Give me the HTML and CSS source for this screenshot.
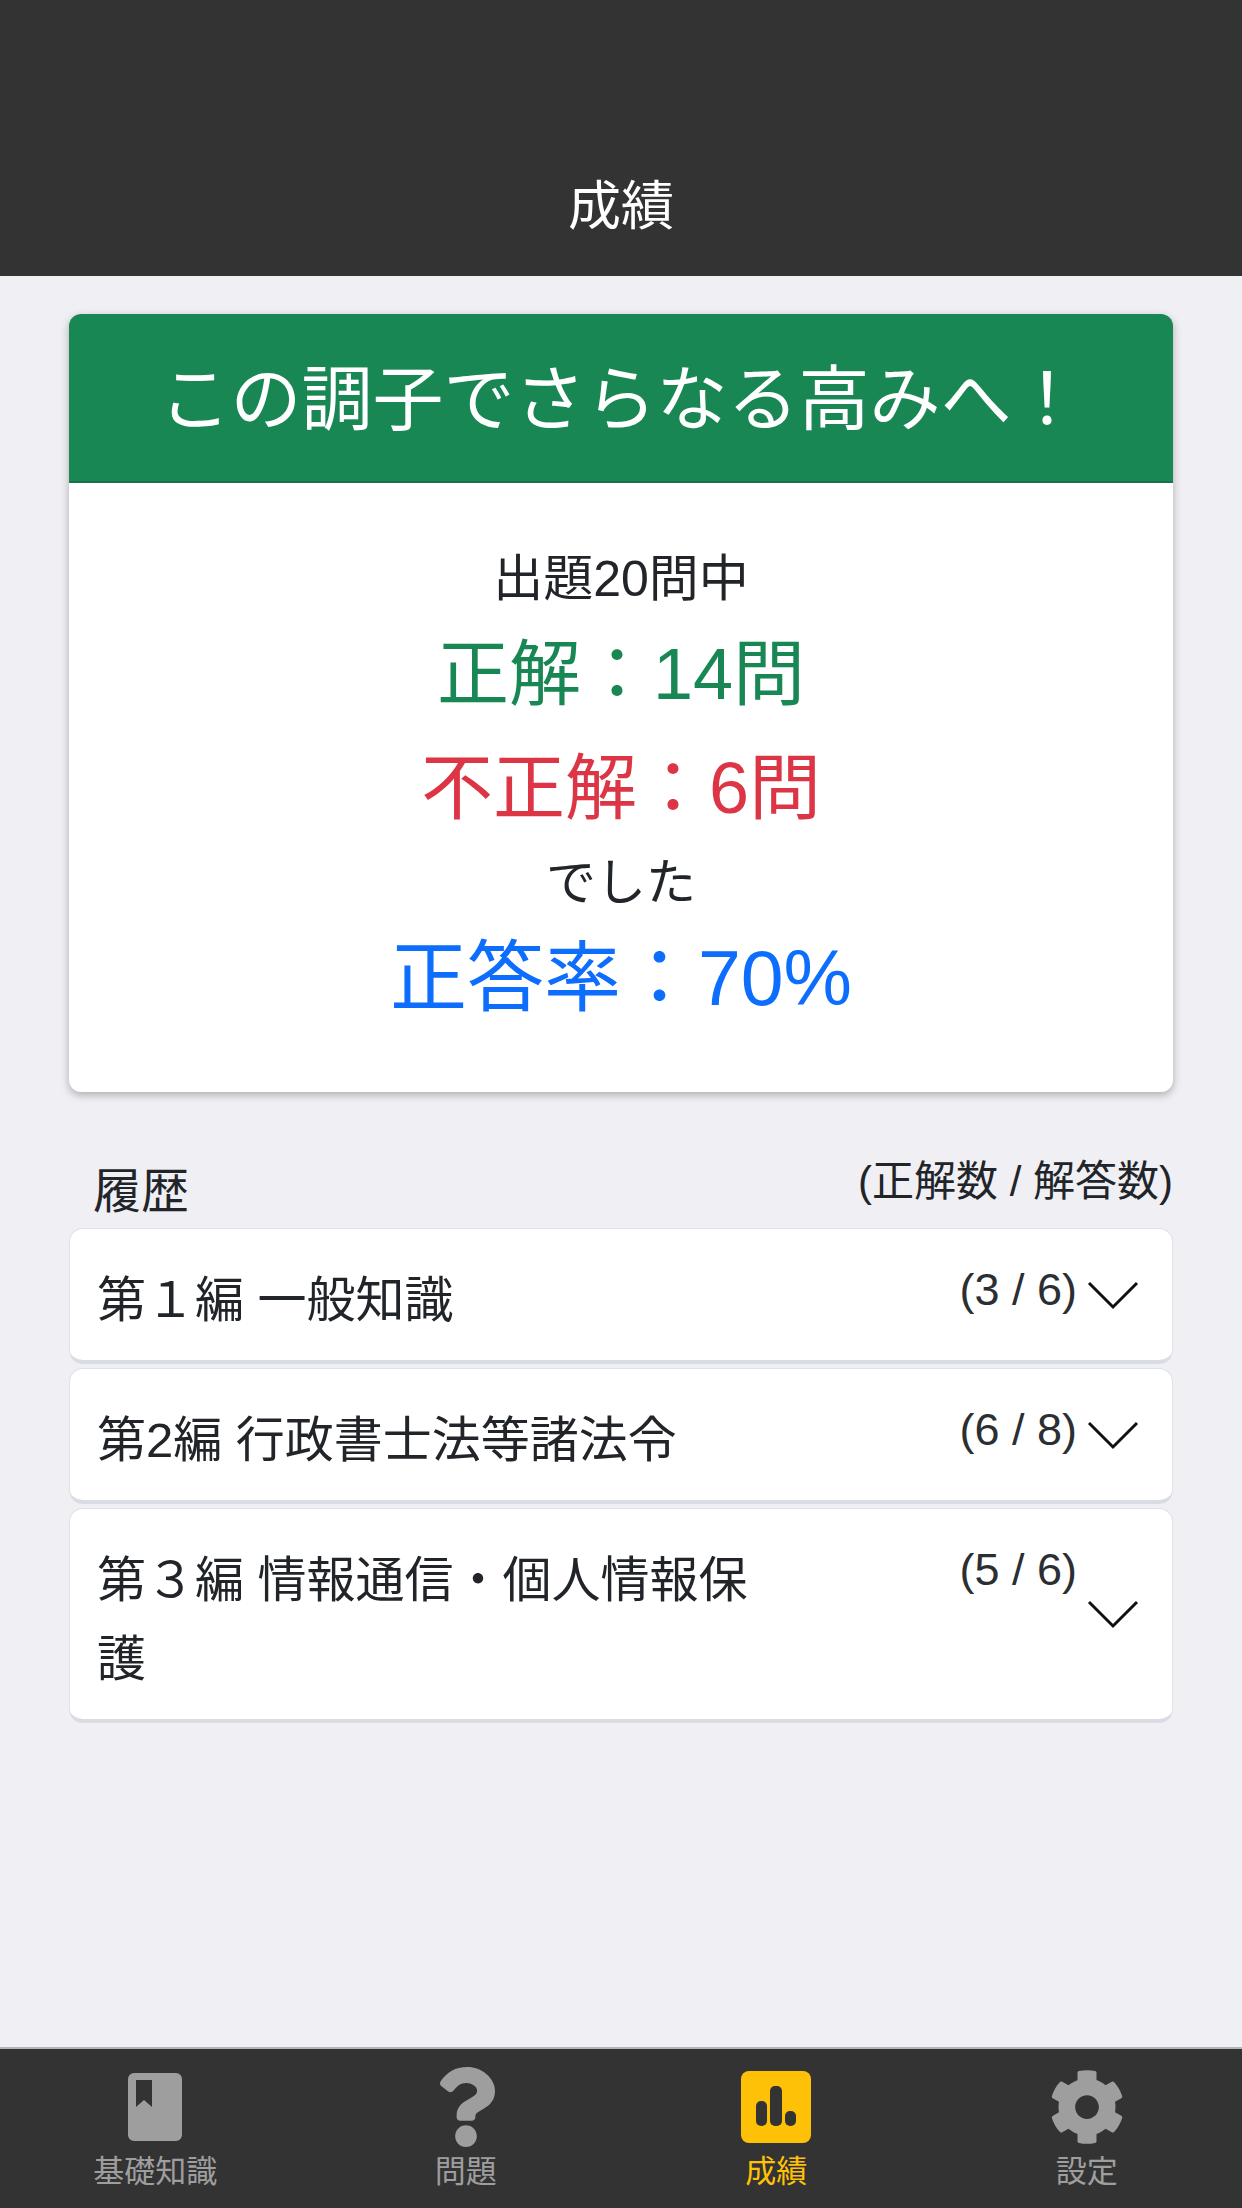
FILE: index.html
```html
<!DOCTYPE html>
<html lang="ja">
<head>
<meta charset="utf-8">
<title>成績</title>
<link rel="stylesheet" href="styles.css">
</head>
<body>
<div class="app">
  <header class="topBar">成績</header>

  <main class="content">
    <section class="resultCard">
      <div class="resultHead">この調子でさらなる高みへ！</div>
      <div class="resultBody">
        <p class="small">出題20問中</p>
        <p class="big green">正解：14問</p>
        <p class="big red">不正解：6問</p>
        <p class="small">でした</p>
        <p class="big blue rate">正答率：70%</p>
      </div>
    </section>

    <div class="historyHead">
      <span class="historyTitle">履歴</span>
      <span class="historyNote">(正解数 / 解答数)</span>
    </div>

    <div class="historyList">
      <div class="historyRow">
        <div class="rowName">第１編 一般知識</div>
        <div class="rowCount">(3 / 6)</div>
        <svg class="chevron" viewBox="0 0 52 30"><path d="M2 3 L26 27 L50 3"/></svg>
      </div>
      <div class="historyRow">
        <div class="rowName">第2編 行政書士法等諸法令</div>
        <div class="rowCount">(6 / 8)</div>
        <svg class="chevron" viewBox="0 0 52 30"><path d="M2 3 L26 27 L50 3"/></svg>
      </div>
      <div class="historyRow">
        <div class="rowName">第３編 情報通信・個人情報保護</div>
        <div class="rowCount">(5 / 6)</div>
        <svg class="chevron" viewBox="0 0 52 30"><path d="M2 3 L26 27 L50 3"/></svg>
      </div>
    </div>
  </main>

  <nav class="tabBar">
    <div class="tab">
      <div class="iconBox">
        <svg class="tabIcon" width="54" height="68" viewBox="0 0 54 68"><path fill-rule="evenodd" d="M6 0H48A6 6 0 0 1 54 6V62A6 6 0 0 1 48 68H6A6 6 0 0 1 0 62V6A6 6 0 0 1 6 0ZM8 7V34L16 27L24 34V7Z"/></svg>
      </div>
      <span>基礎知識</span>
    </div>
    <div class="tab">
      <div class="iconBox">
        <svg class="tabIcon" width="60" height="80" viewBox="0 0 384 512" preserveAspectRatio="none"><path d="M202.021 0C122.202 0 70.503 32.703 29.914 91.026c-7.363 10.58-5.093 25.086 5.178 32.874l43.138 32.709c10.373 7.865 25.132 6.026 33.253-4.148 25.049-31.381 43.63-49.449 82.757-49.449 30.764 0 68.816 19.799 68.816 49.631 0 22.552-18.617 34.134-48.993 51.164-35.423 19.86-82.299 44.576-82.299 106.405V320c0 13.255 10.745 24 24 24h72.471c13.255 0 24-10.745 24-24v-5.773c0-42.86 125.268-44.645 125.268-160.627C377.504 66.256 286.902 0 202.021 0zM192 373.459c-38.196 0-69.271 31.075-69.271 69.271 0 38.195 31.075 69.27 69.271 69.27s69.271-31.075 69.271-69.271-31.075-69.27-69.271-69.27z"/></svg>
      </div>
      <span>問題</span>
    </div>
    <div class="tab active">
      <div class="iconBox">
        <svg class="tabIcon" width="70" height="72" viewBox="0 0 70 72"><rect class="tile" width="70" height="72" rx="8"/><rect class="bar" x="15" y="30" width="11" height="25" rx="5"/><rect class="bar" x="29" y="15" width="12" height="40" rx="5"/><rect class="bar" x="44" y="40" width="11" height="15" rx="5"/></svg>
      </div>
      <span>成績</span>
    </div>
    <div class="tab">
      <div class="iconBox">
        <svg class="tabIcon" width="76" height="76" viewBox="0 0 512 512"><path d="M487.4 315.7l-42.6-24.6c4.3-23.2 4.3-47 0-70.2l42.6-24.6c4.9-2.8 7.1-8.6 5.5-14-11.1-35.6-30-67.8-54.7-94.6-3.8-4.1-10-5.1-14.8-2.3L380.8 110c-17.9-15.4-38.5-27.3-60.8-35.1V25.8c0-5.6-3.9-10.5-9.4-11.7-36.7-8.2-74.3-7.8-109.2 0-5.5 1.2-9.4 6.1-9.4 11.7V75c-22.2 7.9-42.8 19.8-60.8 35.1L88.7 85.5c-4.9-2.8-11-1.9-14.8 2.3-24.7 26.7-43.6 58.9-54.7 94.6-1.7 5.4.6 11.2 5.5 14L67.3 221c-4.3 23.2-4.3 47 0 70.2l-42.6 24.6c-4.9 2.8-7.1 8.6-5.5 14 11.1 35.6 30 67.8 54.7 94.6 3.8 4.1 10 5.1 14.8 2.3l42.6-24.6c17.9 15.4 38.5 27.3 60.8 35.1v49.2c0 5.6 3.9 10.5 9.4 11.7 36.7 8.2 74.3 7.8 109.2 0 5.5-1.2 9.4-6.1 9.4-11.7v-49.2c22.2-7.9 42.8-19.8 60.8-35.1l42.6 24.6c4.9 2.8 11 1.9 14.8-2.3 24.7-26.7 43.6-58.9 54.7-94.6 1.5-5.5-.7-11.3-5.6-14.1zM256 336c-44.1 0-80-35.9-80-80s35.9-80 80-80 80 35.9 80 80-35.9 80-80 80z"/></svg>
      </div>
      <span>設定</span>
    </div>
  </nav>
</div>
</body>
</html>
```

FILE: styles.css
```css
body {
  margin: 0;
  font-family: "Liberation Sans", "Noto Sans CJK JP", sans-serif;
  color: #212529;
}

.app {
  display: flex;
  flex-direction: column;
  height: 2208px;
  background-color: #efeff4;
}

.topBar {
  height: 276px;
  box-sizing: border-box;
  padding-top: 172px;
  line-height: 70px;
  background-color: #333333;
  color: #ffffff;
  font-size: 53px;
  text-align: center;
}

.content {
  flex: 1;
  padding: 38px 69px 0 69px;
}

.resultCard {
  height: 778px;
  background-color: #ffffff;
  border-radius: 12px;
  overflow: hidden;
  box-shadow: 0 3px 8px rgba(0, 0, 0, 0.28);
}

.resultHead {
  height: 169px;
  box-sizing: border-box;
  padding-top: 3px;
  line-height: 166px;
  background-color: #198754;
  border-bottom: 2px solid #15744a;
  color: #ffffff;
  font-size: 71px;
  text-align: center;
}

.resultBody {
  padding-top: 58px;
  text-align: center;
}

.resultBody p {
  margin: 0;
}

.small {
  font-size: 50px;
  line-height: 76px;
}

.big {
  font-size: 72px;
  line-height: 114px;
}

.rate {
  margin-top: 14px;
  font-size: 77px;
}

.green { color: #198754; }
.red { color: #dc3545; }
.blue { color: #0d6efd; }

.historyHead {
  display: flex;
  justify-content: space-between;
  height: 136px;
  box-sizing: border-box;
  padding-left: 24px;
  padding-top: 65px;
}

.historyTitle {
  font-size: 48px;
  line-height: 70px;
}

.historyNote {
  font-size: 42px;
  line-height: 50px;
}

.historyList {
  display: flex;
  flex-direction: column;
  gap: 4px;
}

.historyRow {
  display: flex;
  align-items: center;
  box-sizing: border-box;
  min-height: 136px;
  padding: 0 33px 0 27px;
  background-color: #ffffff;
  border: 1px solid #dfe2e8;
  border-bottom: 4px solid #d9dde3;
  border-radius: 14px;
}

.rowName {
  width: 680px;
  padding: 32px 0 20px 0;
  font-size: 49px;
  line-height: 79px;
}

.rowCount {
  margin-left: auto;
  align-self: flex-start;
  padding-top: 36px;
  font-size: 45px;
  line-height: 50px;
  color: #2b2f33;
}

.chevron {
  width: 52px;
  height: 30px;
  margin-left: 10px;
}

.chevron path {
  fill: none;
  stroke: #111111;
  stroke-width: 3;
}

.tabBar {
  display: grid;
  grid-template-columns: repeat(4, 1fr);
  height: 161px;
  box-sizing: border-box;
  background-color: #333333;
  border-top: 2px solid #b5b5b5;
}

.tab {
  display: flex;
  flex-direction: column;
  align-items: center;
  color: #9e9e9e;
  font-size: 31px;
}

.iconBox {
  display: flex;
  align-items: center;
  height: 80px;
  margin-top: 18px;
}

.tab span {
  margin-top: 3px;
  line-height: 44px;
}

.tabIcon {
  fill: #9e9e9e;
}

.tab.active {
  color: #ffc107;
}

.tile { fill: #ffc107; }
.bar { fill: #333333; }
```
